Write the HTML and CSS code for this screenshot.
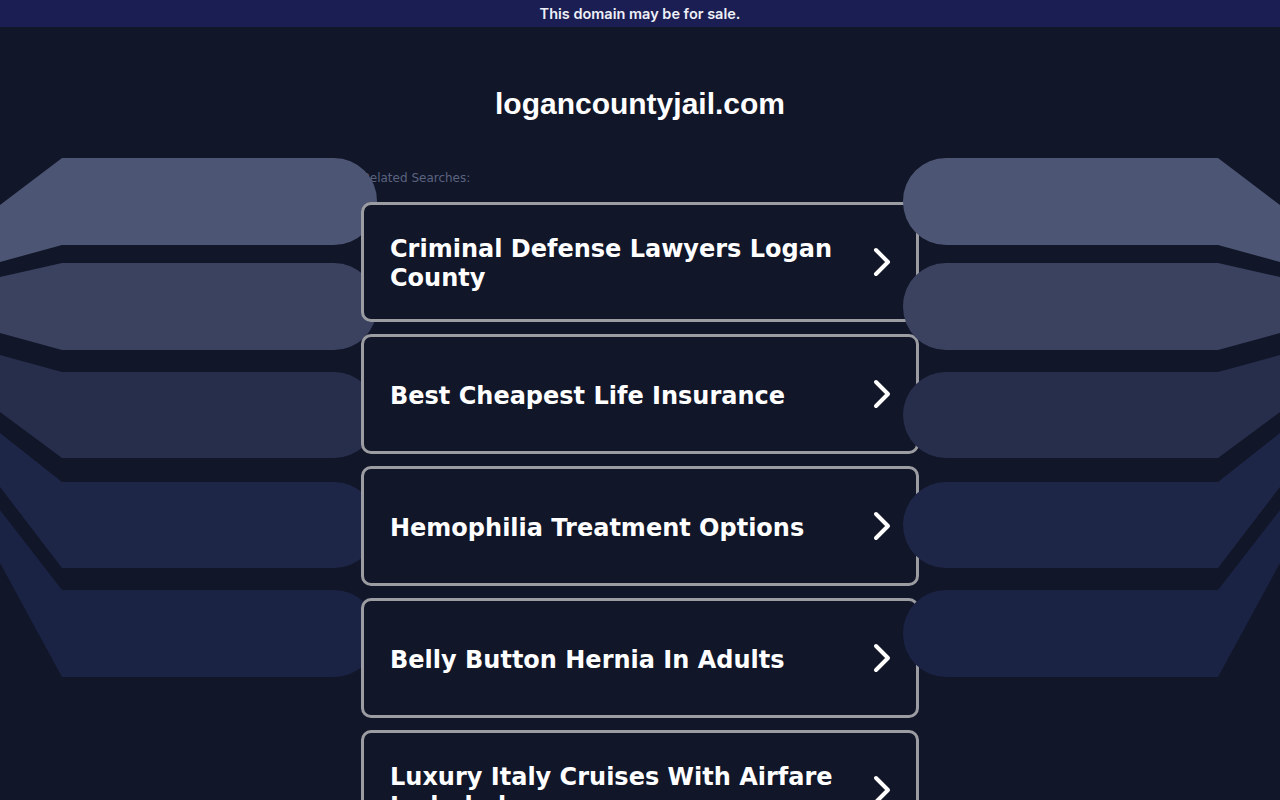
FILE: index.html
```html
<!DOCTYPE html>
<html lang="en">
<head>
<meta charset="utf-8">
<title>logancountyjail.com</title>
<link rel="stylesheet" href="styles.css">
</head>
<body>
<div class="banner">This domain may be for sale.</div>
<h1 class="domain">logancountyjail.com</h1>
<div class="stage">
  <main class="center">
    <div class="label">Related Searches:</div>
    <div class="cards">
      <a class="card" href="#"><span class="card-text">Criminal Defense Lawyers Logan County</span><svg class="chev" viewBox="0 0 20 32"><path d="M4 4 L16 16 L4 28"/></svg></a>
      <a class="card" href="#"><span class="card-text">Best Cheapest Life Insurance</span><svg class="chev" viewBox="0 0 20 32"><path d="M4 4 L16 16 L4 28"/></svg></a>
      <a class="card" href="#"><span class="card-text">Hemophilia Treatment Options</span><svg class="chev" viewBox="0 0 20 32"><path d="M4 4 L16 16 L4 28"/></svg></a>
      <a class="card" href="#"><span class="card-text">Belly Button Hernia In Adults</span><svg class="chev" viewBox="0 0 20 32"><path d="M4 4 L16 16 L4 28"/></svg></a>
      <a class="card" href="#"><span class="card-text">Luxury Italy Cruises With Airfare Included</span><svg class="chev" viewBox="0 0 20 32"><path d="M4 4 L16 16 L4 28"/></svg></a>
    </div>
  </main>
  <div class="deco deco-left">
    <svg class="bands" viewBox="0 0 380 520" aria-hidden="true">
      <path fill="#4c5573" d="M0 47 L62 0 H334 A43 43 0 0 1 377 43 V44 A43 43 0 0 1 334 87 H62 L0 104 Z"/>
      <path fill="#3a4260" d="M0 119 L62 105 H334 A43 43 0 0 1 377 148 V149 A43 43 0 0 1 334 192 H62 L0 175 Z"/>
      <path fill="#272e4b" d="M0 197 L62 214 H334 A43 43 0 0 1 377 257 A43 43 0 0 1 334 300 H62 L0 254 Z"/>
      <path fill="#1e2647" d="M0 275 L62 324 H334 A43 43 0 0 1 377 367 A43 43 0 0 1 334 410 H62 L0 329 Z"/>
      <path fill="#1b2345" d="M0 352 L62 432 H334 A43 43 0 0 1 377 475 V476 A43 43 0 0 1 334 519 H62 L0 405 Z"/>
    </svg>
  </div>
  <div class="deco deco-right">
    <svg class="bands" viewBox="0 0 380 520" aria-hidden="true">
      <path fill="#4c5573" d="M0 47 L62 0 H334 A43 43 0 0 1 377 43 V44 A43 43 0 0 1 334 87 H62 L0 104 Z"/>
      <path fill="#3a4260" d="M0 119 L62 105 H334 A43 43 0 0 1 377 148 V149 A43 43 0 0 1 334 192 H62 L0 175 Z"/>
      <path fill="#272e4b" d="M0 197 L62 214 H334 A43 43 0 0 1 377 257 A43 43 0 0 1 334 300 H62 L0 254 Z"/>
      <path fill="#1e2647" d="M0 275 L62 324 H334 A43 43 0 0 1 377 367 A43 43 0 0 1 334 410 H62 L0 329 Z"/>
      <path fill="#1b2345" d="M0 352 L62 432 H334 A43 43 0 0 1 377 475 V476 A43 43 0 0 1 334 519 H62 L0 405 Z"/>
    </svg>
  </div>
</div>
</body>
</html>
```

FILE: styles.css
```css
html, body {
  margin: 0;
  padding: 0;
  background: #111629;
}
body {
  font-family: "DejaVu Sans", Verdana, sans-serif;
  color: #ffffff;
  overflow: hidden;
}
.banner {
  height: 27px;
  line-height: 27px;
  background: #1b1e52;
  color: #eef0f8;
  text-align: center;
  font-family: Inter, "Noto Sans", sans-serif;
  font-weight: 600;
  font-size: 14.5px;
}
.domain {
  margin: 0;
  padding-top: 60px;
  height: 34px;
  line-height: 34px;
  text-align: center;
  font-family: "Liberation Sans", Arial, sans-serif;
  font-weight: 700;
  font-size: 30px;
  color: #ffffff;
}
.stage {
  margin-top: 37px;
  display: grid;
  grid-template-columns: minmax(0, 1fr) 558px minmax(0, 1fr);
}
.center {
  grid-column: 2;
  grid-row: 1;
}
.deco {
  grid-row: 1;
  min-width: 0;
}
.deco-left {
  grid-column: 1;
}
.deco-right {
  grid-column: 3;
}
.bands {
  display: block;
  width: 380px;
  height: 520px;
}
.deco-right .bands {
  margin-left: -19px;
  transform: scaleX(-1);
}
.label {
  padding-top: 12px;
  height: 16px;
  line-height: 16px;
  font-size: 12px;
  color: #5b6380;
  padding-left: 1px;
}
.cards {
  margin-top: 16px;
  display: flex;
  flex-direction: column;
  gap: 12px;
}
.card {
  position: relative;
  box-sizing: border-box;
  height: 120px;
  display: flex;
  align-items: center;
  justify-content: space-between;
  gap: 20px;
  padding: 0 24px 0 26px;
  border: 3px solid #9c9da2;
  border-radius: 10px;
  background: #111629;
  color: #ffffff;
  text-decoration: none;
}
.card-text {
  margin-top: 4px;
  font-family: "DejaVu Sans", Verdana, sans-serif;
  font-weight: 700;
  font-size: 24px;
  line-height: 29px;
}
.chev {
  flex: none;
  width: 20px;
  height: 32px;
}
.chev path {
  fill: none;
  stroke: #ffffff;
  stroke-width: 4;
  stroke-linecap: round;
  stroke-linejoin: round;
}
```
